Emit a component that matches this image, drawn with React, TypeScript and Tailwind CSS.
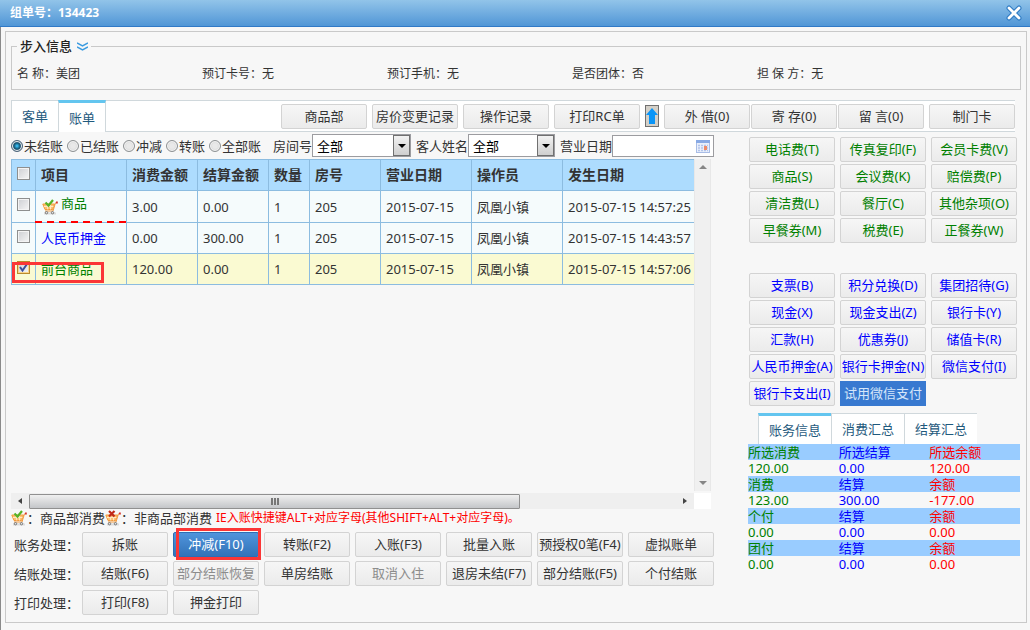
import { useState, type ReactNode } from 'react';

type Tone = 'default' | 'green' | 'blue' | 'muted' | 'primary';

const TONES: Record<Tone, string> = {
  default: 'text-[#333] border-[#d3d3d3] bg-linear-to-b from-[#f6f6f6] to-[#ebebeb]',
  green: 'text-[#008000] border-[#d3d3d3] bg-linear-to-b from-[#f6f6f6] to-[#ebebeb]',
  blue: 'text-[#0000ff] border-[#d3d3d3] bg-linear-to-b from-[#f6f6f6] to-[#ebebeb]',
  muted: 'text-[#8c8c8c] border-[#d3d3d3] bg-linear-to-b from-[#f6f6f6] to-[#ebebeb]',
  primary: 'text-white border-[#2e6db4] bg-linear-to-b from-[#5094dc] to-[#3273b8]',
};

function Button({ tone = 'default', children }: { tone?: Tone; children: ReactNode }) {
  return (
    <button
      type="button"
      disabled={tone === 'muted'}
      className={`h-[25px] w-[86px] shrink-0 whitespace-nowrap rounded-[2px] border text-[13px] leading-[23px] flex items-center justify-center ${TONES[tone]}`}
    >
      {children}
    </button>
  );
}

function CartIcon({ removed = false }: { removed?: boolean }) {
  return (
    <svg className="h-4 w-4 shrink-0" viewBox="0 0 16 16" fill="none">
      <path d="M2 14.500h12" stroke="#dcdcdc" strokeWidth="2" />
      <path d="M.8 5h11.700l-1.800 5.500H3z" fill="#fcc274" stroke="#f39a3c" />
      <path d="M2 7.500h9.500M5 5.500l.8 5M8.500 5.500v5" stroke="#ffe9c2" />
      <path d="M15 3.500l-1.500.3L11 12H3" stroke="#f09a40" />
      <path d="M14 3.500h1.800" stroke="#d8322a" strokeWidth="1.800" />
      <circle cx="4.500" cy="13.700" r="1.200" fill="#e4e4e4" stroke="#777" />
      <circle cx="10.500" cy="13.700" r="1.200" fill="#e4e4e4" stroke="#777" />
      {removed ? (
        <path d="M4 1l5.500 5.500M9.500 1L4 6.500" stroke="#c02a18" strokeWidth="2.200" />
      ) : (
        <path d="M3.500 3.500l3 3L11 1" stroke="#56b328" strokeWidth="2.200" />
      )}
    </svg>
  );
}

const INFO = ['名 称：美团', '预订卡号：无', '预订手机：无', '是否团体：否', '担 保 方：无'];

const FILTERS = ['未结账', '已结账', '冲减', '转账', '全部账'];

const COLUMNS = ['项目', '消费金额', '结算金额', '数量', '房号', '营业日期', '操作员', '发生日期'];

const ROWS = [
  { item: '商品', cost: '3.00', settled: '0.00', time: '14:57:25' },
  { item: '人民币押金', cost: '0.00', settled: '300.00', time: '14:43:57' },
  { item: '前台商品', cost: '120.00', settled: '0.00', time: '14:57:06' },
];

const CHARGES = [
  '电话费(T)', '传真复印(F)', '会员卡费(V)',
  '商品(S)', '会议费(K)', '赔偿费(P)',
  '清洁费(L)', '餐厅(C)', '其他杂项(O)',
  '早餐券(M)', '税费(E)', '正餐券(W)',
];

const PAYMENTS = [
  '支票(B)', '积分兑换(D)', '集团招待(G)',
  '现金(X)', '现金支出(Z)', '银行卡(Y)',
  '汇款(H)', '优惠券(J)', '储值卡(R)',
  '人民币押金(A)', '银行卡押金(N)', '微信支付(I)',
  '银行卡支出(I)',
];

const SUMMARY = [
  { labels: ['所选消费', '所选结算', '所选余额'], values: ['120.00', '0.00', '120.00'] },
  { labels: ['消费', '结算', '余额'], values: ['123.00', '300.00', '-177.00'] },
  { labels: ['个付', '结算', '余额'], values: ['0.00', '0.00', '0.00'] },
  { labels: ['团付', '结算', '余额'], values: ['0.00', '0.00', '0.00'] },
];

const SUMMARY_COLORS = ['text-[#008000]', 'text-[#0000ff]', 'text-[#ff0000]'];

const ACTIONS: { label: string; buttons: { text: string; tone?: Tone }[] }[] = [
  {
    label: '账务处理：',
    buttons: [
      { text: '拆账' },
      { text: '冲减(F10)', tone: 'primary' },
      { text: '转账(F2)' },
      { text: '入账(F3)' },
      { text: '批量入账' },
      { text: '预授权0笔(F4)' },
      { text: '虚拟账单' },
    ],
  },
  {
    label: '结账处理：',
    buttons: [
      { text: '结账(F6)' },
      { text: '部分结账恢复', tone: 'muted' },
      { text: '单房结账' },
      { text: '取消入住', tone: 'muted' },
      { text: '退房未结(F7)' },
      { text: '部分结账(F5)' },
      { text: '个付结账' },
    ],
  },
  { label: '打印处理：', buttons: [{ text: '打印(F8)' }, { text: '押金打印' }] },
];

function SelectBox({ id, width }: { id: string; width: string }) {
  return (
    <span className={`relative h-[23px] ${width}`}>
      <select
        id={id}
        className="h-full w-full appearance-none border border-[#9c9ca0] bg-white pl-1 pt-px text-[13px] leading-5 text-black"
      >
        <option>全部</option>
      </select>
      <span className="pointer-events-none absolute right-px top-px flex h-[21px] w-[17px] items-center justify-center border border-[#707070] bg-linear-to-b from-[#f2f2f2] to-[#cfcfcf]">
        <span className="border-x-4 border-t-4 border-x-transparent border-t-black" />
      </span>
    </span>
  );
}

function CheckBox({ label, checked, onChange }: { label: string; checked: boolean; onChange: () => void }) {
  return (
    <span className="relative mx-auto block h-[13px] w-[13px]">
      <input
        type="checkbox"
        aria-label={label}
        checked={checked}
        onChange={onChange}
        className="block h-[13px] w-[13px] appearance-none border border-[#8e8f8f] bg-linear-to-br from-[#cdcfd3] to-[#f6f6f6] shadow-[inset_0_0_0_1px_#f4f4f4] checked:border-[#b98a2c] checked:shadow-[inset_0_0_0_1px_#fad48a]"
      />
      {checked && (
        <svg className="pointer-events-none absolute inset-0" viewBox="0 0 13 13" fill="none">
          <path d="M3 6l2.500 3.500L10 3" stroke="#3b4f9c" strokeWidth="2" />
        </svg>
      )}
    </span>
  );
}

export default function App() {
  const [filter, setFilter] = useState('未结账');
  const [checked, setChecked] = useState([false, false, true]);

  const toggle = (index: number) => setChecked(checked.map((c, i) => (i === index ? !c : c)));
  const allChecked = checked.every(Boolean);

  return (
    <div className="min-h-screen bg-[#f7f7f7] font-['Noto_Sans','Noto_Sans_CJK_SC',sans-serif] text-[13px] leading-4 text-[#333]">
      {/* Title bar */}
      <header className="flex h-[27px] items-center justify-between border-b border-[#3079c6] bg-linear-to-b from-[#92c4e9] to-[#5096d6] pl-[10px] pr-2">
        <h1 className="text-xs font-bold text-white">组单号：134423</h1>
        <button type="button" aria-label="关闭">
          <svg className="h-4 w-4" viewBox="0 0 16 16" fill="none" strokeLinecap="round">
            <path d="M3 3l10 10M13 3L3 13" stroke="#2f7cc4" strokeWidth="5" />
            <path d="M3 3l10 10M13 3L3 13" stroke="#fff" strokeWidth="2.800" />
          </svg>
        </button>
      </header>

      <div className="border-l border-[#8a8a8a] pb-[7px] pl-1 pr-[3px] pt-1">
        <main className="border border-[#c9c9c9] px-[5px] pb-[7px] pt-[6px]">
          <fieldset className="border border-[#c9c9c9] pb-[7px] pl-[5px] pr-[78px]">
            <legend className="flex h-4 items-center gap-[5px] px-[3px] font-medium text-[#222]">
              步入信息
              <svg className="h-[9px] w-[11px]" viewBox="0 0 11 9" fill="none">
                <path d="M0 1l5.500 3L11 1M0 5l5.500 3L11 5" stroke="#3a9be0" strokeWidth="1.500" />
              </svg>
            </legend>
            <div className="grid grid-cols-5 pt-3 text-xs">
              {INFO.map((text) => (
                <span key={text}>{text}</span>
              ))}
            </div>
          </fieldset>

          {/* Tabs and top actions */}
          <div className="mr-[6px] mt-[10px] flex h-8 justify-between bg-white">
            <div className="flex text-[#1f5a7d]">
              <button type="button" className="w-[47px] border border-r-0 border-[#d0d8dc]">客单</button>
              <button type="button" className="w-12 border-x border-t-3 border-x-[#d0d8dc] border-t-[#63c5ef]">账单</button>
            </div>
            <div className="flex flex-1 items-center justify-end gap-[5px] border-y border-[#d0d8dc]">
              <Button>商品部</Button>
              <Button>房价变更记录</Button>
              <Button>操作记录</Button>
              <Button>打印RC单</Button>
              <button type="button" aria-label="上移" className="flex h-[22px] w-[14px] items-center justify-center border border-[#707070] bg-[#d4d0c8]">
                <svg className="h-4 w-3 shrink-0" viewBox="0 0 12 16" fill="#0a95f7">
                  <path d="M6 0l6 7H9v9H3V7H0z" />
                </svg>
              </button>
              <div className="flex gap-px">
                <Button>外 借(0)</Button>
                <Button>寄 存(0)</Button>
                <Button>留 言(0)</Button>
              </div>
              <Button>制门卡</Button>
            </div>
          </div>

          <div className="flex gap-[34px]">
            <section className="min-w-0 flex-1">
              {/* Filters */}
              <div className="mt-[2px] flex h-[23px] items-center whitespace-nowrap">
                <div className="flex gap-1">
                  {FILTERS.map((name) => (
                    <label key={name} className="flex items-center gap-px">
                      <input
                        type="radio"
                        name="filter"
                        checked={filter === name}
                        onChange={() => setFilter(name)}
                        className="h-3 w-3 appearance-none rounded-full border border-[#8e9193] bg-radial from-[#e9e9e9] from-30% to-[#cfcfcf] shadow-[inset_0_0_0_1px_#f4f4f4] checked:border-[#4a6277] checked:from-[#35b4e8] checked:from-10% checked:via-[#12516f] checked:via-45% checked:to-[#dfe6ea]"
                      />
                      {name}
                    </label>
                  ))}
                </div>
                <label htmlFor="room" className="ml-3">房间号</label>
                <SelectBox id="room" width="w-[99px]" />
                <label htmlFor="guest" className="ml-[5px]">客人姓名</label>
                <SelectBox id="guest" width="w-[87px]" />
                <label htmlFor="date" className="ml-[5px]">营业日期</label>
                <span className="relative h-[22px] min-w-0 flex-1">
                  <input id="date" type="text" className="h-full w-full border border-[#9c9ca0] bg-white px-1" />
                  <svg className="pointer-events-none absolute right-1 top-1 h-[14px] w-[14px]" viewBox="0 0 14 14">
                    <rect x=".5" y="1.500" width="13" height="12" fill="#e9effb" stroke="#a9bde6" />
                    <path d="M0 1h14v3H0z" fill="#88a9e4" />
                    <path d="M2 6.500h10M2 9h10M2 11.500h10" stroke="#b3c4ea" strokeWidth="1.500" strokeDasharray="2 1" />
                    <path d="M8 7h3v4H8z" fill="#ee8a68" />
                  </svg>
                </span>
              </div>

              {/* Bills */}
              <div className="mt-[2px] flex h-[332px]">
                <div className="min-w-0 flex-1 overflow-hidden">
                  <table className="w-[801px] table-fixed border-collapse text-left [&_td]:border [&_td]:border-[#8cbce0] [&_td]:px-[5px] [&_td]:py-0 [&_th]:border [&_th]:border-[#8cbce0] [&_th]:px-[5px] [&_th]:py-0">
                    <colgroup>
                      <col className="w-6" />
                      <col className="w-[91px]" />
                      <col className="w-[71px]" />
                      <col className="w-[71px]" />
                      <col className="w-[41px]" />
                      <col className="w-[71px]" />
                      <col className="w-[91px]" />
                      <col className="w-[91px]" />
                      <col />
                    </colgroup>
                    <thead>
                      <tr className="h-[31px] bg-[#addcfe] text-sm leading-4">
                        <th>
                          <div className="pb-1">
                            <CheckBox label="全选" checked={allChecked} onChange={() => setChecked(checked.map(() => !allChecked))} />
                          </div>
                        </th>
                        {COLUMNS.map((name) => (
                          <th key={name} className="font-bold">{name}</th>
                        ))}
                      </tr>
                    </thead>
                    <tbody>
                      {ROWS.map((row, index) => (
                        <tr key={row.item} className={index === 0 ? 'h-8 bg-[#f5fbfc]' : checked[index] ? 'h-[31px] bg-[#fafad2]' : 'h-[31px] bg-[#f5fbfc]'}>
                          <td className="relative">
                            <div className="pb-1">
                              <CheckBox label={row.item} checked={checked[index]} onChange={() => toggle(index)} />
                            </div>
                            {index === 2 && (
                              <span className="pointer-events-none absolute left-0 top-2 z-10 h-[21px] w-[92px] border-3 border-[#fb3636]" />
                            )}
                          </td>
                          <td className={index === 1 ? 'text-[#0000ff]' : 'relative text-[#008000]'}>
                            {index === 0 ? (
                              <span className="flex items-start gap-[3px] pb-1 pl-px">
                                <span className="pt-1"><CartIcon /></span>
                                {row.item}
                              </span>
                            ) : (
                              row.item
                            )}
                            {index === 0 && (
                              <svg className="absolute -bottom-px -left-px h-[2px] w-[92px]" viewBox="0 0 92 2">
                                <path d="M0 1h92" stroke="#f00" strokeWidth="2" strokeDasharray="7 5" />
                              </svg>
                            )}
                          </td>
                          <td>{row.cost}</td>
                          <td>{row.settled}</td>
                          <td>1</td>
                          <td>205</td>
                          <td>2015-07-15</td>
                          <td>凤凰小镇</td>
                          <td>2015-07-15 {row.time}</td>
                        </tr>
                      ))}
                    </tbody>
                  </table>
                </div>
                <div className="mr-[3px] flex w-[17px] flex-col items-center justify-between border-x border-[#e8e8e8] bg-[#f0f0f0] py-[6px]">
                  <span className="border-x-4 border-b-4 border-x-transparent border-b-[#868686]" />
                  <span className="border-x-4 border-t-4 border-x-transparent border-t-[#868686]" />
                </div>
              </div>
              <div className="mr-[3px] mt-[2px] flex h-4">
                <div className="flex flex-1 items-center bg-[#efefef] px-[7px]">
                  <span className="border-y-3 border-r-4 border-y-transparent border-r-[#444]" />
                  <div className="ml-[7px] flex h-[15px] w-[491px] items-center justify-center gap-px rounded-[1px] border border-[#909090] bg-linear-to-b from-[#f0f0f0] to-[#c4c6c9]">
                    <i className="h-[7px] w-[2px] bg-[#777]" />
                    <i className="h-[7px] w-[2px] bg-[#777]" />
                    <i className="h-[7px] w-[2px] bg-[#777]" />
                  </div>
                  <span className="ml-auto border-y-3 border-l-4 border-y-transparent border-l-[#444]" />
                </div>
                <div className="w-[17px] bg-white" />
              </div>

              <div className="mt-px flex h-4 items-center whitespace-nowrap">
                <CartIcon />：商品部消费
                <CartIcon removed />：非商品部消费
                <span className="ml-1 text-xs text-[#ff0000]">IE入账快捷键ALT+对应字母(其他SHIFT+ALT+对应字母)。</span>
              </div>

              {/* Bottom actions */}
              <div className="mt-[6px] flex flex-col gap-1">
                {ACTIONS.map((group) => (
                  <div key={group.label} className="flex items-center gap-[5px] pl-[3px]">
                    <span className="w-[63px] shrink-0 whitespace-nowrap">{group.label}</span>
                    {group.buttons.map((button) =>
                      button.tone === 'primary' ? (
                        <div key={button.text} className="relative">
                          <Button tone="primary">{button.text}</Button>
                          <span className="pointer-events-none absolute -bottom-[3px] -right-[2px] -top-1 left-[3px] border-3 border-[#fb3636]" />
                        </div>
                      ) : (
                        <Button key={button.text} tone={button.tone}>{button.text}</Button>
                      ),
                    )}
                  </div>
                ))}
              </div>
            </section>

            <aside className="w-[273px] shrink-0 pr-px pt-[5px]">
              <div className="grid grid-cols-[repeat(3,86px)] gap-x-[5px] gap-y-[2px] pl-px">
                {CHARGES.map((name) => (
                  <Button key={name} tone="green">{name}</Button>
                ))}
              </div>
              <div className="mt-[30px] grid grid-cols-[repeat(3,86px)] gap-x-[5px] gap-y-[2px] pl-px">
                {PAYMENTS.map((name) => (
                  <Button key={name} tone="blue">{name}</Button>
                ))}
                <a href="#wechat" className="flex h-[25px] items-center justify-center bg-[#3879d0] pb-[2px] text-[#d5e6fa]">试用微信支付</a>
              </div>

              <div className="ml-[10px] mt-[7px] flex h-[31px] w-[219px] bg-white text-[#1f5a7d]">
                <button type="button" className="flex-1 border-l border-t-3 border-l-[#d0d8dc] border-t-[#63c5ef]">账务信息</button>
                <button type="button" className="flex-1 border-l border-t border-[#d0d8dc]">消费汇总</button>
                <button type="button" className="flex-1 border-l border-t border-[#d0d8dc]">结算汇总</button>
              </div>
              <table className="w-full table-fixed border-collapse text-left">
                {SUMMARY.map((group) => (
                  <tbody key={group.labels[0]}>
                    <tr className="h-4 bg-[#99ccff]">
                      {group.labels.map((label, i) => (
                        <th key={i} className={`p-0 font-normal ${SUMMARY_COLORS[i]}`}>{label}</th>
                      ))}
                    </tr>
                    <tr className="h-4">
                      {group.values.map((value, i) => (
                        <td key={i} className={`p-0 ${SUMMARY_COLORS[i]}`}>{value}</td>
                      ))}
                    </tr>
                  </tbody>
                ))}
              </table>
            </aside>
          </div>
        </main>
      </div>
    </div>
  );
}
